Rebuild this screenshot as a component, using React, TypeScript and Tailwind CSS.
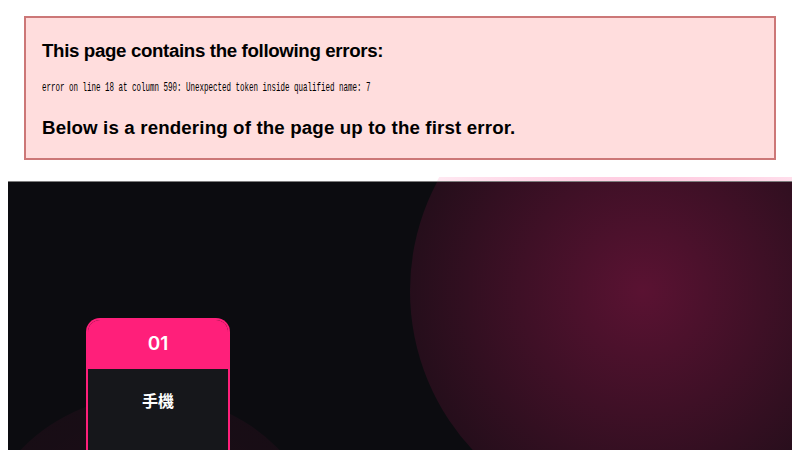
import { FunctionComponent } from 'react'

const ErrorBox: FunctionComponent = () => (
  <div className="mx-[24px] mt-[16px] h-[144px] border-2 border-[#cc7777] bg-[#ffdddd] px-[16px] text-black">
    <h3 className="pt-[22px] text-[18.7px] font-bold leading-[22px] tracking-[-0.35px] font-['Liberation_Sans',Arial,sans-serif]">
      This page contains the following errors:
    </h3>
    <div className="mt-[11px] h-[15px] whitespace-pre">
      <span className="inline-block origin-left scale-x-[0.577] text-[13px] leading-[15px] font-['Liberation_Mono',monospace]">
        error on line 18 at column 590: Unexpected token inside qualified name: 7
      </span>
    </div>
    <h3 className="mt-[29px] text-[18.7px] font-bold leading-[22px] tracking-[0.15px] font-['Liberation_Sans',Arial,sans-serif]">
      Below is a rendering of the page up to the first error.
    </h3>
  </div>
)

const StepCard: FunctionComponent<{ num: string; label: string }> = ({ num, label }) => (
  <div className="w-[144px] overflow-hidden rounded-t-[14px] border-2 border-b-0 border-[#ff1f7a] bg-[#16171b]">
    <div className="flex h-[49px] items-center justify-center bg-[#ff1f7a] text-[19px] font-semibold text-white font-['Inter',sans-serif]">
      {num}
    </div>
    <div className="flex h-[110px] justify-center pt-[19px] text-[16px] font-bold text-white font-['Noto_Sans_CJK_TC',sans-serif]">
      {label}
    </div>
  </div>
)

const glow =
  'bg-[radial-gradient(circle,rgba(255,31,122,0.32)_0%,rgba(255,31,122,0.2)_40%,rgba(255,31,122,0.09)_75%,rgba(255,31,122,0.05)_100%)]'

export default function App() {
  return (
    <div className="relative h-[450px] w-[800px] overflow-hidden bg-white">
      <ErrorBox />
      <div className="relative mx-[8px] mt-[17px] h-[4px] overflow-hidden">
        <div className={`absolute left-[402px] top-[-120px] h-[466px] w-[466px] rounded-full ${glow}`} />
      </div>
      <section className="relative mx-[8px] h-[300px] overflow-hidden border-t border-[#7d7d7d] bg-[#0c0c10] pl-[78px] pt-[136px]">
        <div className={`absolute left-[402px] top-[-124px] h-[466px] w-[466px] rounded-full ${glow}`} />
        <div className="absolute left-[-38px] top-[213px] h-[360px] w-[360px] rounded-full bg-[radial-gradient(circle,rgba(255,31,122,0.08)_0%,rgba(255,31,122,0.035)_100%)]" />
        <div className="relative">
          <StepCard num="01" label="手機" />
        </div>
      </section>
    </div>
  )
}
